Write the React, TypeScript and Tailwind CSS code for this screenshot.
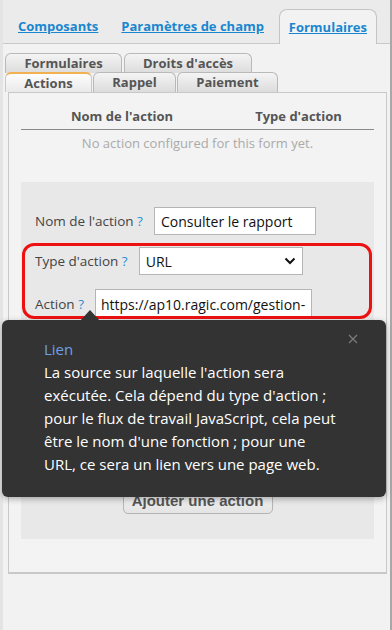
const SUB_ROW_1 = [
  { label: 'Formulaires', w: 'w-[117px]' },
  { label: "Droits d'accès", w: 'w-[128px]' },
]

const SUB_ROW_2 = [
  { label: 'Actions', w: 'w-[87px]', active: true },
  { label: 'Rappel', w: 'w-[83px]' },
  { label: 'Paiement', w: 'w-[101px]' },
]

function SubTab({ label, w, active }: { label: string; w: string; active?: boolean }) {
  return (
    <div
      className={`${w} flex h-[20px] items-center justify-center rounded-t-[6px] border border-b-0 text-[13px] font-bold leading-none text-[#555] ${
        active
          ? 'border-[#c9c9c9] border-t-2 border-t-[#f2b150] bg-gradient-to-b from-[#fdfdfd] to-[#e9e9e9]'
          : 'border-[#b9b9b9] bg-gradient-to-b from-[#f4f4f4] to-[#dcdcdc]'
      }`}
    >
      {label}
    </div>
  )
}

function Help() {
  return <span className="text-[#2b8fd6]"> ?</span>
}

export default function App() {
  return (
    <div className="relative h-[630px] w-[392px] overflow-hidden bg-[#f2f2f2] font-['Open_Sans',sans-serif]">
      <div className="h-full border-l-[3px] border-r-2 border-l-[#e4e4e4] border-r-[#a8a8a8]">
        {/* top tabs */}
        <div className="flex h-[44px] items-end border-b border-[#c9c9c9] bg-[#ebebeb]">
          <a className="mb-[8px] ml-[15px] text-[13px] font-bold leading-[18px] text-[#1a86cf] underline">
            Composants
          </a>
          <a className="mb-[8px] ml-[23px] text-[13px] font-bold leading-[18px] text-[#1a86cf] underline">
            Paramètres de champ
          </a>
          <div className="-mb-px ml-auto mr-[13px] flex h-[35px] items-center rounded-t-[8px] border border-b-0 border-[#c4c4c4] bg-[#f2f2f2] px-[9px] pt-[2px]">
            <a className="text-[13px] font-bold text-[#1a86cf] underline">Formulaires</a>
          </div>
        </div>

        {/* sub tabs */}
        <div className="pl-[2px] pt-[9px]">
          <div className="flex gap-[2px]">
            {SUB_ROW_1.map((t) => (
              <SubTab key={t.label} {...t} />
            ))}
          </div>
          <div className="-mt-px flex gap-px">
            {SUB_ROW_2.map((t) => (
              <SubTab key={t.label} {...t} />
            ))}
          </div>
        </div>

        {/* panel */}
        <div className="ml-[5px] h-[482px] w-[379px] border border-b-2 border-[#c8c8c8] bg-[#f3f3f3] px-[12px] pt-[11px]">
          <div className="flex h-[26px] items-center border-b border-[#8a8a8a] text-[13px] font-bold text-[#555]">
            <div className="w-[202px] text-center">Nom de l'action</div>
            <div className="flex-1 text-center">Type d'action</div>
          </div>
          <div className="flex h-[27px] items-center justify-center text-[13px] text-[#aaa]">
            No action configured for this form yet.
          </div>

          <div className="relative mt-[25px] flex h-[357px] flex-col bg-[#e8e8e8] pl-[14px] pt-[25px] text-[13.5px] text-[#444]">
            <div className="flex h-[28px] items-center gap-[11px]">
              <span>
                Nom de l'action
                <Help />
              </span>
              <div className="flex h-[28px] w-[162px] items-center border border-[#b5b5b5] bg-white px-[6px] text-[14px] text-[#111]">
                Consulter le rapport
              </div>
            </div>
            <div className="mt-[12px] flex h-[28px] items-center gap-[11px]">
              <span>
                Type d'action
                <Help />
              </span>
              <div className="flex h-[28px] w-[164px] items-center justify-between border border-[#b5b5b5] bg-white pl-[6px] pr-[6px] text-[14px] text-[#111]">
                URL
                <svg width="12" height="8" viewBox="0 0 12 8" fill="none">
                  <path d="M1.5 1.5 6 6l4.5-4.5" stroke="#111" strokeWidth="2" />
                </svg>
              </div>
            </div>
            <div className="mt-[14px] flex h-[30px] items-center gap-[11px]">
              <span>
                Action
                <Help />
              </span>
              <div className="flex h-[30px] w-[217px] items-center overflow-hidden whitespace-nowrap border border-[#b5b5b5] bg-white px-[5px] text-[14px] text-[#111]">
                https://ap10.ragic.com/gestion-
              </div>
            </div>

            <div className="mt-[169px] flex justify-center pr-[14px]">
              <button className="h-[26px] w-[150px] rounded-[5px] border border-[#b5b5b5] bg-gradient-to-b from-[#f6f6f6] to-[#e4e4e4] font-['Liberation_Sans',Arial,sans-serif] text-[15px] font-bold text-[#555]">
                Ajouter une action
              </button>
            </div>

            {/* highlight annotation */}
            <div className="pointer-events-none absolute left-[1px] top-[61px] h-[76px] w-[350px] rounded-[12px] border-[3px] border-[#ee1111]" />
          </div>
        </div>
      </div>

      {/* tooltip */}
      <div className="absolute left-[2px] top-[320px] h-[177px] w-[384px] rounded-[6px] bg-[#333] px-[42px] pt-[18px] text-[15px] leading-[23px] text-white shadow-[0_2px_6px_rgba(0,0,0,0.3)]">
        <div className="absolute -top-[10px] left-[78px] h-0 w-0 border-x-[10px] border-b-[11px] border-x-transparent border-b-[#333]" />
        <svg className="absolute right-[28px] top-[14px]" width="10" height="10" viewBox="0 0 10 10">
          <path d="M1 1l8 8M9 1 1 9" stroke="#7a7a7a" strokeWidth="1.3" />
        </svg>
        <p className="text-[#6ba0ea]">Lien</p>
        <p className="whitespace-nowrap">
          La source sur laquelle l'action sera
          <br />
          exécutée. Cela dépend du type d'action ;
          <br />
          pour le flux de travail JavaScript, cela peut
          <br />
          être le nom d'une fonction ; pour une
          <br />
          URL, ce sera un lien vers une page web.
        </p>
      </div>
    </div>
  )
}
